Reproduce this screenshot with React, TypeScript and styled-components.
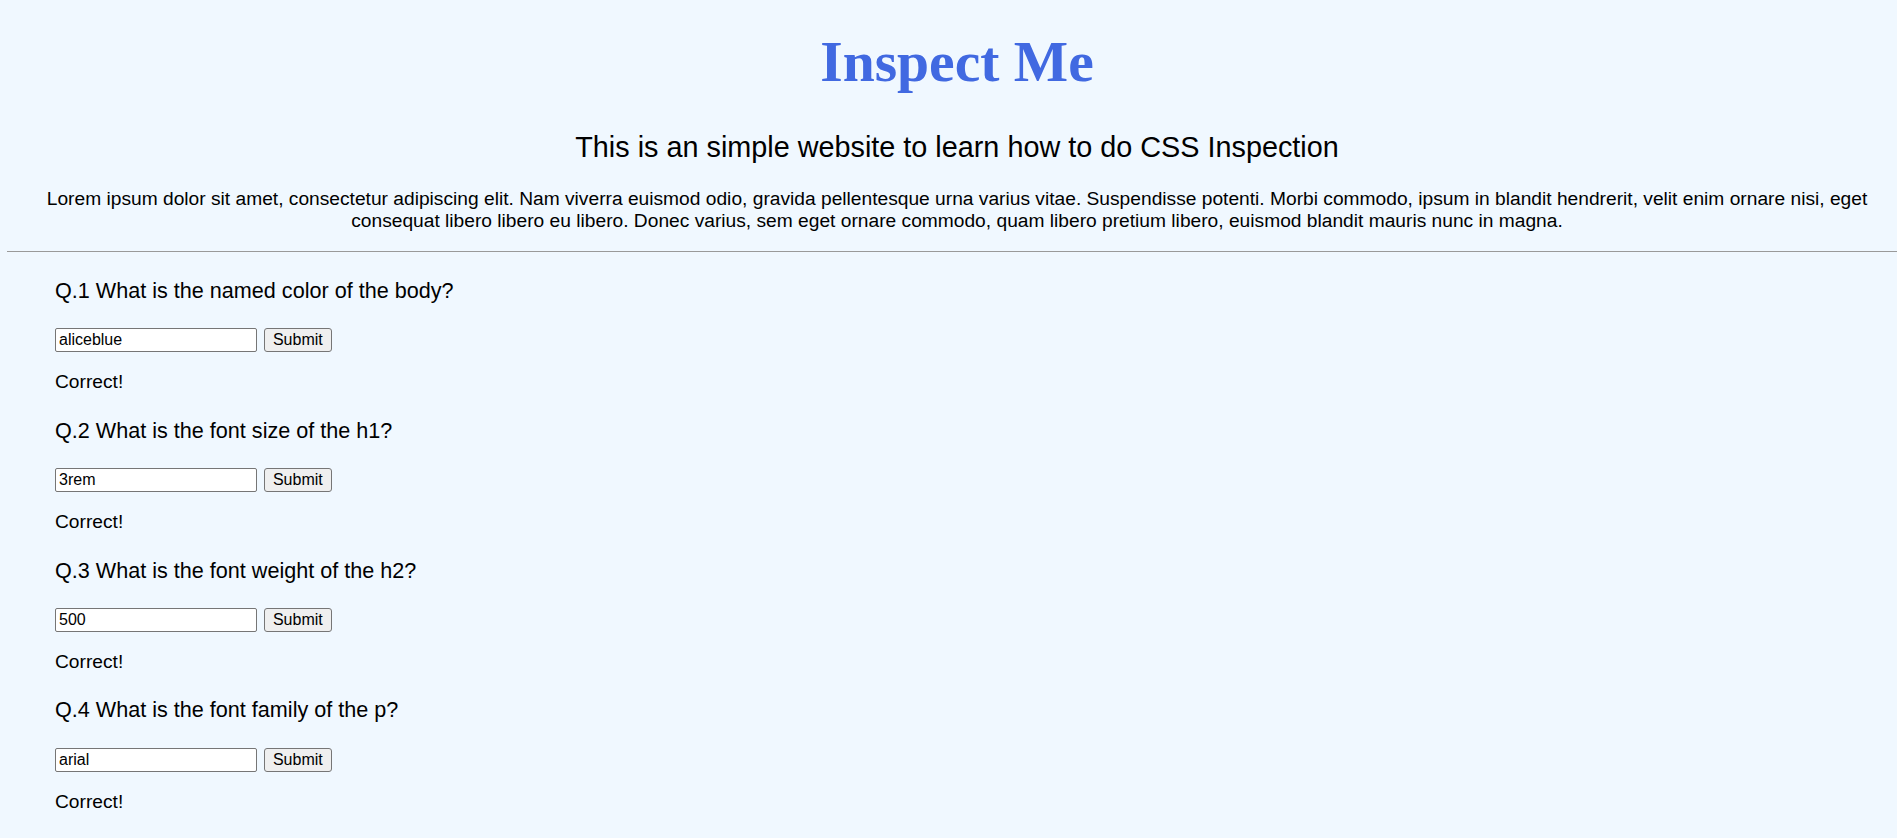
import React, { useState } from "react";
import styled, { createGlobalStyle } from "styled-components";

const GlobalStyle = createGlobalStyle`
  html, body {
    margin: 0;
    padding: 0;
    overflow: hidden;
    background: #f0f8ff;
  }
  body {
    font-family: "Liberation Sans", Arial, sans-serif;
    color: #000;
  }
`;

const Page = styled.div`
  margin-left: 7px;
  width: 1900px;
  text-align: center;
`;

const Title = styled.h1`
  margin: 29.3px 0 0;
  font-family: "Liberation Serif", "Times New Roman", serif;
  font-size: 57.6px;
  line-height: 66px;
  font-weight: 700;
  color: #4169e1;
`;

const Subtitle = styled.h2`
  margin: 35.5px 0 0;
  font-size: 28.8px;
  line-height: 33px;
  font-weight: 500;
`;

const Intro = styled.p`
  margin: 24.5px 0 0;
  font-size: 19.2px;
  line-height: 22px;
`;

const Divider = styled.hr`
  margin: 18.7px 0 0;
  height: 0;
  border: none;
  border-top: 1px solid #9a9a9a;
`;

const QuizList = styled.section`
  text-align: left;
  padding: 25.7px 0 0 48px;
`;

const QuestionBlock = styled.div`
  padding-bottom: 24.35px;
`;

const QuestionLabel = styled.div`
  font-size: 21.6px;
  line-height: 25px;
`;

const AnswerRow = styled.form`
  display: flex;
  align-items: center;
  gap: 6.6px;
  margin-top: 25.6px;
  height: 24px;
`;

const AnswerInput = styled.input`
  box-sizing: border-box;
  width: 202.4px;
  height: 24px;
  margin: 0;
  padding: 1px 3px;
  border: 1px solid #767676;
  border-radius: 2px;
  background: #fff;
  font-family: "Liberation Sans", Arial, sans-serif;
  font-size: 16px;
  color: #000;
  outline: none;
`;

const SubmitButton = styled.button`
  box-sizing: border-box;
  width: 67.7px;
  height: 24px;
  margin: 0;
  padding: 0 7px;
  border: 1px solid #767676;
  border-radius: 3px;
  background: #efefef;
  font-family: "Liberation Sans", Arial, sans-serif;
  font-size: 16px;
  color: #000;
`;

const Feedback = styled.p`
  margin: 19px 0 0;
  font-size: 19.2px;
  line-height: 22px;
`;

const questions = [
  { label: "Q.1 What is the named color of the body?", answer: "aliceblue" },
  { label: "Q.2 What is the font size of the h1?", answer: "3rem" },
  { label: "Q.3 What is the font weight of the h2?", answer: "500" },
  { label: "Q.4 What is the font family of the p?", answer: "arial" },
];

function Question({ label, answer }: { label: string; answer: string }) {
  const [value, setValue] = useState(answer);
  return (
    <QuestionBlock>
      <QuestionLabel>{label}</QuestionLabel>
      <AnswerRow onSubmit={(e) => e.preventDefault()}>
        <AnswerInput value={value} onChange={(e) => setValue(e.target.value)} />
        <SubmitButton type="submit">Submit</SubmitButton>
      </AnswerRow>
      <Feedback>Correct!</Feedback>
    </QuestionBlock>
  );
}

export default function App() {
  return (
    <>
      <GlobalStyle />
      <Page>
        <Title>Inspect Me</Title>
        <Subtitle>This is an simple website to learn how to do CSS Inspection</Subtitle>
        <Intro>
          Lorem ipsum dolor sit amet, consectetur adipiscing elit. Nam viverra euismod odio, gravida
          pellentesque urna varius vitae. Suspendisse potenti. Morbi commodo, ipsum in blandit
          hendrerit, velit enim ornare nisi, eget consequat libero libero eu libero. Donec varius, sem
          eget ornare commodo, quam libero pretium libero, euismod blandit mauris nunc in magna.
        </Intro>
        <Divider />
        <QuizList>
          {questions.map((q) => (
            <Question key={q.label} label={q.label} answer={q.answer} />
          ))}
        </QuizList>
      </Page>
    </>
  );
}
